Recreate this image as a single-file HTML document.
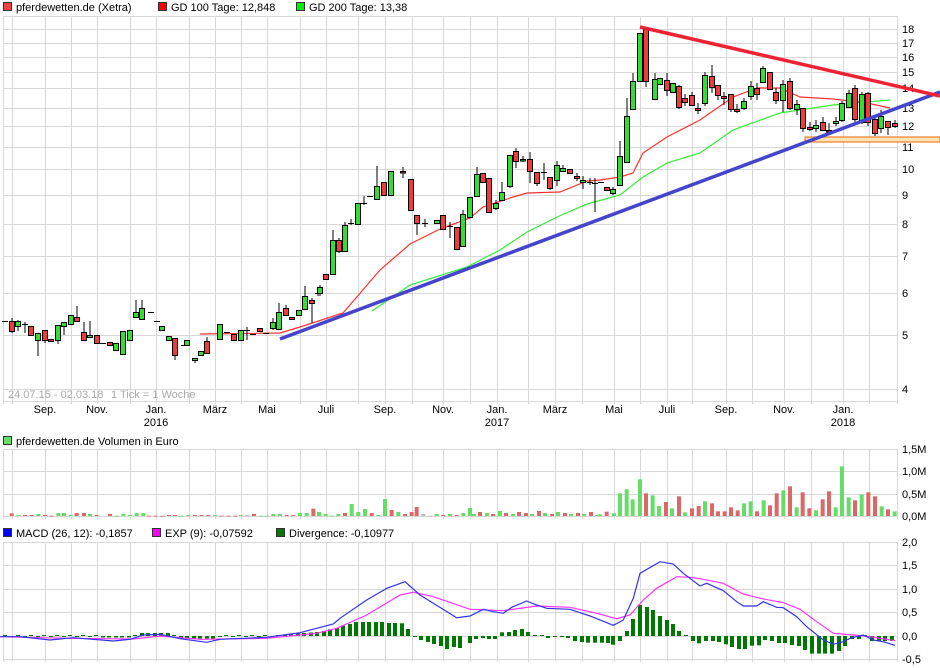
<!DOCTYPE html>
<html><head><meta charset="utf-8">
<style>
html,body{margin:0;padding:0;background:#fff;}
svg{display:block;font-family:"Liberation Sans",sans-serif;}
</style></head><body>
<svg id="c" width="940" height="668" xmlns="http://www.w3.org/2000/svg">
<g id="grid" stroke="#d8d8d8" stroke-width="1" fill="none"></g>
<g font-size="11" fill="#000">
<rect x="3.5" y="2.5" width="8" height="8" fill="#ee4444" stroke="#333"/>
<text x="16" y="11">pferdewetten.de (Xetra)</text>
<rect x="158.5" y="2.5" width="8" height="8" fill="#ff0000" stroke="#333"/>
<text x="171" y="11">GD 100 Tage: 12,848</text>
<rect x="296.5" y="2.5" width="8" height="8" fill="#00ee00" stroke="#333"/>
<text x="309" y="11">GD 200 Tage: 13,38</text>
<rect x="3.5" y="436.5" width="8" height="8" fill="#66dd66" stroke="#333"/>
<text x="16" y="445">pferdewetten.de Volumen in Euro</text>
<rect x="3.5" y="528.5" width="8" height="8" fill="#0000ff" stroke="#333"/>
<text x="16" y="537">MACD (26, 12): -0,1857</text>
<rect x="152.5" y="528.5" width="8" height="8" fill="#ff00ff" stroke="#333"/>
<text x="165" y="537">EXP (9): -0,07592</text>
<rect x="276.5" y="528.5" width="8" height="8" fill="#007700" stroke="#333"/>
<text x="289" y="537">Divergence: -0,10977</text>
<text x="8" y="398" fill="#aaa">24.07.15 - 02.03.18</text>
<text x="111" y="398" fill="#aaa">1 Tick = 1 Woche</text>
</g>
<g font-size="11" fill="#000" text-anchor="middle">
<text x="45" y="413">Sep.</text><text x="97" y="413">Nov.</text><text x="156" y="413">Jan.</text><text x="156" y="426">2016</text>
<text x="215" y="413">März</text><text x="267" y="413">Mai</text><text x="326" y="413">Juli</text><text x="385" y="413">Sep.</text>
<text x="443" y="413">Nov.</text><text x="497" y="413">Jan.</text><text x="497" y="426">2017</text><text x="555" y="413">März</text>
<text x="614" y="413">Mai</text><text x="667" y="413">Juli</text><text x="726" y="413">Sep.</text><text x="784" y="413">Nov.</text>
<text x="843" y="413">Jan.</text><text x="843" y="426">2018</text>
</g>
<g font-size="11" fill="#000">
<text x="902" y="33">18</text><text x="902" y="47">17</text><text x="902" y="61">16</text><text x="902" y="76">15</text>
<text x="902" y="92">14</text><text x="902" y="112">13</text><text x="902" y="130">12</text><text x="902" y="151">11</text>
<text x="902" y="173">10</text><text x="902" y="199">9</text><text x="902" y="228">8</text><text x="902" y="260">7</text>
<text x="902" y="297">6</text><text x="902" y="339">5</text><text x="902" y="393">4</text>
<text x="902" y="453">1,5M</text><text x="902" y="475">1,0M</text><text x="902" y="498">0,5M</text><text x="902" y="520">0,0M</text>
<text x="902" y="546">2,0</text><text x="902" y="569">1,5</text><text x="902" y="593">1,0</text><text x="902" y="616">0,5</text>
<text x="902" y="640">0,0</text><text x="902" y="663">-0,5</text>
</g>
<rect x="805" y="137" width="135" height="5" fill="#fde3b8" stroke="#f08020" stroke-width="1.2"/>
<polyline fill="none" stroke="#ff3030" stroke-width="1.2" points="200,334 280,333 300,327 343,313 380,270 410,244 440,229 470,218 483,207 513,197 527,193 560,192 587,181 600,180 620,177 633,173 643,153 667,137 700,120 733,97 757,88 780,88 800,97 833,99 867,103 890,108"/>
<polyline fill="none" stroke="#33ee33" stroke-width="1.2" points="372,311 410,285 467,267 500,250 527,232 557,217 587,204 620,195 643,177 667,163 700,153 733,130 780,113 833,105 890,100"/>
<g id="candles" stroke="#000" stroke-width="1"></g>
<line x1="280" y1="339" x2="940" y2="92" stroke="#4444cc" stroke-width="3.5"/>
<line x1="640" y1="27" x2="940" y2="96" stroke="#ee2233" stroke-width="3.5"/>
<g id="vol"></g>
<g id="hist" fill="#007700"></g>
<polyline fill="none" stroke="#ff33ff" stroke-width="1.2" id="exp"/>
<polyline fill="none" stroke="#3333ee" stroke-width="1.2" id="macd"/>
</svg>
<script>
var NS="http://www.w3.org/2000/svg";
function el(p,t,a){var e=document.createElementNS(NS,t);for(var k in a)e.setAttribute(k,a[k]);p.appendChild(e);return e;}
var g=document.getElementById('grid');
var vx=[3,12,45,71,97,130,156,189,215,241,267,300,326,358,385,412,443,470,497,528,555,582,614,640,667,692,726,752,784,811,843,869,897];
var panels=[[16,401,[29,43,57,72,88,108,126,147,169,195,224,256,293,335,389]],[449,516,[449,471,494,516]],[542,659,[542,565,589,612,636,659]]];
panels.forEach(function(p){
 vx.forEach(function(x){el(g,'line',{x1:x+.5,y1:p[0],x2:x+.5,y2:p[1]+3});});
 el(g,'line',{x1:3,y1:p[0]+.5,x2:897,y2:p[0]+.5});
 p[2].forEach(function(y){el(g,'line',{x1:3,y1:y+.5,x2:897,y2:y+.5});});
 el(g,'line',{x1:3,y1:p[1]+.5,x2:897,y2:p[1]+.5});
});
var C=[[5,321,321,2],[12,321,331,0,318,333],[18,321,326,1,320,331],[25,324,324,2,322,333],[31,326,335,0],[38,333,340,1,333,356],[45,330,340,0,330,343],[51,339,341,0],[58,325,340,1,325,344],[64,322,326,1,322,335],[71,315,324,1],[77,317,321,0,306,321],[84,332,340,0,322,340],[90,335,337,1,321,337],[97,335,343,0],[103,343,343,2],[110,342,345,0],[116,343,350,1],[123,331,354,1],[130,330,340,1],[136,312,317,1,300,317],[142,308,319,1,300,319],[151,312,312,2],[157,321,321,2],[162,326,330,1],[169,336,340,1],[175,338,355,0,338,360],[184,345,345,2],[187,340,345,1],[195,358,360,1,358,363],[201,351,355,1],[207,341,353,0,337,353],[220,324,339,1],[227,332,332,2],[234,334,340,0],[241,330,340,1],[247,330,330,2,327,340],[253,334,334,2],[260,328,331,0],[266,333,333,2],[273,322,328,1,318,330],[279,312,329,1,303,329],[286,308,315,0,305,315],[292,317,319,0],[299,310,315,1],[305,296,309,1,286,309],[312,300,303,0,298,323],[318,293,293,2,290,296],
[320,287,293,1,285,296],[326,274,279,0],[333,240,274,1,230,274],[339,240,251,0,238,253],[345,225,251,1,222,251],[351,223,223,2,219,225],[358,203,224,1],[364,203,203,2,196,205],[370,196,196,2],[377,186,199,1,166,199],[384,182,195,0],[391,171,195,1],[403,171,172,0,167,178],[411,179,210,0],[417,215,223,0,215,235],[425,223,223,2,219,227],[437,220,223,1],[443,215,229,0],[450,226,226,2,222,238],[457,227,249,0],[463,214,246,1,210,246],[470,197,217,1],[477,174,196,1,167,196],[483,173,182,0],[489,178,212,0],[496,203,208,1,200,210],[502,192,200,1,182,200],[510,155,186,1,155,188],[516,151,161,0,148,168],[523,159,160,1,156,162],[530,159,171,0,152,183],[537,172,183,0,172,186],[544,172,172,2,163,180],[550,177,188,0,177,190],[557,165,180,1,161,186],[563,168,171,1,165,172],[570,169,173,0],[577,176,178,0,173,181],[583,180,182,1,176,189],[590,182,182,2,178,185],[595,183,183,2,178,212],[601,182,182,2],[607,187,190,0],[613,189,193,1,187,195],[620,156,185,1,141,185],[627,116,162,1,98,162],[633,81,109,1,73,109],[640,33,81,1],[646,29,81,0,27,87],[655,79,99,1,73,99],[660,78,84,1],[667,80,90,0,73,96],[673,83,92,1],[679,86,107,0,85,109],[685,98,102,0,94,106],[692,95,105,0,92,106],[698,108,110,0,103,114],[705,75,103,1,72,106],[712,76,87,0,65,93],[718,85,95,0,85,100],[724,96,98,0,92,105],[731,94,109,0,94,112],[737,109,111,0,104,113],[744,101,108,1,98,110],[751,86,96,1,81,100],[757,88,94,0,83,100],[763,68,82,1,66,82],[770,72,89,0],[776,92,100,0,88,104],[783,84,100,1,80,112],[790,81,108,0,78,110],[797,104,109,1,100,115],[803,108,128,0,108,132],[810,127,129,0,122,131],[816,125,128,1,120,132],[823,122,130,0,117,130],[829,130,131,0,123,132],[836,121,123,1,117,126],[842,103,120,1,101,122],[849,93,107,1,90,107],[855,88,119,0,85,122],[862,94,122,1,92,124],[868,93,122,0,92,126],[875,119,133,0,115,136],[881,116,128,1,110,133],[888,121,127,0,121,135],[895,123,126,0,120,128]];
var cg=document.getElementById('candles');
C.forEach(function(c){
 var x=c[0],t=c[1],b=c[2],k=c[3],wt=c[4]||t,wb=c[5]||b;
 if(wt<t)el(cg,'line',{x1:x,y1:wt,x2:x,y2:t});
 if(wb>b)el(cg,'line',{x1:x,y1:b,x2:x,y2:wb});
 if(k==2){el(cg,'line',{x1:x-3,y1:t+.5,x2:x+3,y2:t+.5});}
 else el(cg,'rect',{x:x-2.5,y:t+.5,width:5,height:Math.max(b-t,1.5),fill:k?'#33dd33':'#ee3b3b'});
});
var vg=document.getElementById('vol');
var L=[[35,400,'r'],[55,405,'g'],[75,405,'r'],[95,405,'r'],[115,402,'g'],[135,405,'r'],[155,407,'r'],[175,399,'g'],[192,399,'g'],[212,405,'g'],[230,399,'r'],[252,399,'r'],[270,402,'g'],[290,405,'r'],[330,402,'r'],[350,407,'g'],[370,402,'g'],[390,405,'g'],[410,399,'g'],[430,399,'g'],[447,407,'r'],[467,407,'r'],[487,407,'r'],[507,405,'r'],[525,405,'r'],[545,407,'g'],[565,405,'g'],[585,405,'r'],[605,405,'r'],[625,405,'r'],[645,405,'g'],[665,407,'r'],[685,407,'r'],[705,407,'r'],[722,405,'g'],[742,405,'x'],[762,402,'r'],[782,407,'g'],[800,407,'g'],[820,402,'g'],[840,402,'g'],[860,405,'r'],[880,405,'r'],[900,399,'g'],[920,399,'g'],[940,386,'r'],[957,396,'g'],[977,402,'g'],[997,407,'g'],[1015,402,'g'],[1035,399,'r'],[1055,372,'g'],[1075,396,'g'],[1095,387,'g'],[1115,399,'r'],[1135,405,'g'],[1155,357,'g'],[1175,390,'r'],[1195,396,'g'],[1215,402,'r'],[1235,396,'r'],[1250,381,'r'],[1270,402,'x'],[1290,407,'x'],[1310,402,'g'],[1330,405,'r'],[1350,402,'g'],[1370,405,'r'],[1390,399,'g'],[1410,384,'g']];
var cols={r:'#dd6666',g:'#66dd66',x:'#bbbbbb'};
L.forEach(function(v){var x=v[0]/3,h=(408-v[1])/3;el(vg,'rect',{x:x-2,y:516-h,width:4,height:Math.max(h,.8),fill:cols[v[2]]});});
var mid=[[474,2,'g'],[480,4,'r'],[487,3,'g'],[493,2,'r'],[500,5,'g'],[506,3,'r'],[513,2,'g'],[519,4,'r'],[526,3,'r'],[532,2,'g'],[539,5,'r'],[545,3,'g'],[552,2,'r'],[558,4,'g'],[565,3,'r'],[571,2,'g'],[578,3,'r'],[584,2,'g'],[591,4,'r'],[597,1,'g']];
mid.forEach(function(v){el(vg,'rect',{x:v[0]-2,y:516-v[1],width:4,height:v[1],fill:cols[v[2]]});});
var R=[[0,435,'g'],[20,427,'r'],[42,432,'g'],[60,372,'g'],[80,360,'g'],[98,390,'g'],[120,330,'g'],[138,372,'r'],[158,378,'g'],[177,410,'g'],[198,398,'r'],[216,417,'g'],[237,381,'r'],[255,429,'g'],[276,417,'r'],[296,410,'r'],[315,396,'g'],[336,402,'r'],[354,426,'r'],[374,426,'r'],[393,414,'r'],[413,423,'r'],[432,402,'g'],[452,396,'g'],[471,426,'r'],[491,393,'g'],[510,408,'r'],[530,372,'r'],[550,363,'g'],[570,351,'r'],[590,414,'g'],[608,369,'r'],[628,417,'r'],[648,423,'g'],[668,390,'r'],[687,366,'r'],[707,414,'g'],[726,291,'g'],[746,384,'g'],[765,393,'r'],[785,375,'g'],[805,369,'r'],[825,381,'r'],[845,411,'g'],[864,420,'r'],[884,426,'g']];
R.forEach(function(v){var x=600+v[0]/3,h=(440-v[1])/3;el(vg,'rect',{x:x-2,y:516-h,width:4,height:h,fill:cols[v[2]]});});
function pts(a,ox,oy){return a.map(function(p){return (ox+p[0]/3).toFixed(1)+','+(oy+p[1]/3).toFixed(1);}).join(' ');}
var b1=[[0,350],[60,350],[150,360],[220,353],[340,363],[390,358],[430,345],[480,343],[540,356],[620,367],[660,358],[800,352],[900,338],[1000,312],[1020,295],[1100,240],[1160,205],[1215,185],[1260,225],[1300,250],[1370,293],[1410,288]];
var b2=[[40,268],[70,275],[100,280],[125,262],[170,243],[200,255],[230,265],[300,268],[360,288],[430,316],[460,300],[490,235],[510,160],[570,125],[610,132],[640,160],[690,198],[710,190],[760,212],[800,245],[820,258],[860,258],[880,245],[920,262],[940,263],[980,290],[1010,320],[1060,360],[1090,373],[1120,365],[1140,355],[1180,345],[1210,360],[1240,365],[1275,376]];
var m1=[[0,350],[200,355],[400,357],[480,348],[600,358],[800,355],[950,340],[1010,325],[1100,285],[1200,225],[1240,217],[1300,230],[1410,268]];
var m2=[[100,272],[200,258],[300,262],[380,280],[440,296],[480,285],[520,240],[560,205],[620,170],[660,172],[700,178],[760,190],[820,222],[870,235],[940,248],[990,268],[1040,305],[1090,340],[1150,345],[1200,350],[1275,362]];
document.getElementById('macd').setAttribute('points',pts(b1,0,520)+' '+pts(b2,470,520));
document.getElementById('exp').setAttribute('points',pts(m1,0,520)+' '+pts(m2,470,520));
var hg=document.getElementById('hist');
var H={};
for(var x=5;x<278;x+=6.5){var v=(x>138&&x<168)?3:(x%13<6.5?1:-1);if(x>100&&x<135)v=-1.5;if(x>180&&x<215)v=-2.5;H[x.toFixed(0)]=v;}
var A=[[278,1],[285,1.3],[291,2],[298,2.5],[304,3],[311,3.5],[317,4],[324,5],[330,6.7],[337,8],[343,10.3],[350,12],[356,14],[363,14],[369,14],[376,14],[382,14],[389,13],[395,13],[402,12.7],[408,7],[415,-0.5],[421,-4],[428,-6],[434,-8],[441,-10],[447,-13],[454,-11],[460,-12]];
A.forEach(function(a){H[a[0]]=a[1];});
var Z=[[0,-7],[18,-3],[38,-2],[58,-3],[76,-3],[96,3.7],[116,4],[135,6],[155,7],[175,4],[195,1],[215,.7],[235,-2],[255,-1],[275,-1],[295,-2],[315,-5],[335,-6],[355,-6.7],[375,-6.7],[395,-6.7],[415,-7],[430,-8.7],[450,-5],[470,5],[490,17],[510,31],[530,29],[550,26],[570,20],[590,16],[610,12],[628,5],[648,1],[668,-5],[688,-7.3],[708,-5],[728,-5],[748,-6],[768,-8.3],[786,-11],[806,-13],[826,-13],[846,-9.7],[866,-9.3],[886,-4],[906,-5],[926,-7],[946,-7],[966,-9],[986,-10],[1006,-14],[1026,-17.6],[1046,-17.6],[1066,-17.6],[1086,-17.6],[1106,-15],[1126,-10],[1146,-3],[1166,-3],[1186,1],[1206,-5],[1226,-5],[1246,-5],[1266,-5]];
Z.forEach(function(a){H[(470+a[0]/3).toFixed(0)]=a[1];});
for(var k in H){var v=H[k],x=+k;var h=Math.abs(v);if(h<1)h=1;el(hg,'rect',{x:x-2,y:v>0?636-h:636,width:4,height:h});}
</script>
</body></html>
